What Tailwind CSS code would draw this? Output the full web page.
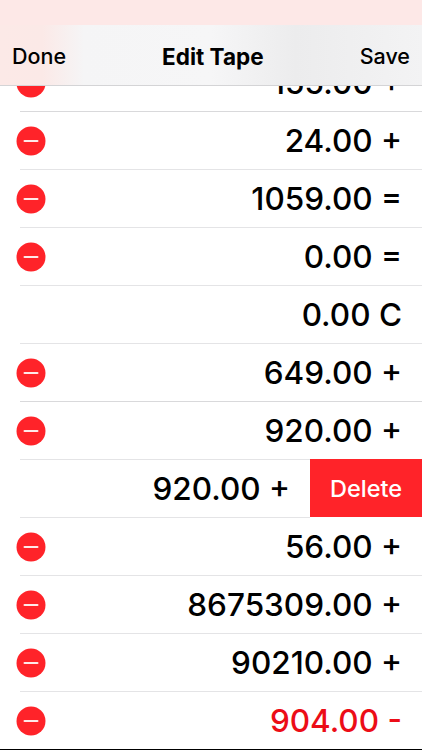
<!DOCTYPE html>
<html lang="en">
<head>
    <meta charset="UTF-8">
    <title>Edit Tape</title>
    <script src="https://cdn.jsdelivr.net/npm/@tailwindcss/browser@4"></script>
</head>
<body class="bg-white">
    <div class="relative w-[422px] h-[750px] overflow-hidden bg-white font-['Inter','Liberation_Sans',sans-serif] text-black">

        <div class="absolute top-0 left-0 right-0 z-10">
            <div class="h-[25px] bg-[#fde8e7]"></div>
            <div class="h-[61px] flex items-center justify-between pl-3 pr-3 pt-[3px] text-[21.5px] font-medium border-b border-[#d4d4d6] bg-[linear-gradient(90deg,#fce9e7_0%,#fbe9e7_10%,#f5f5f6_20%,#f6f6f7_50%,#ececed_70%,#f3f3f4_100%)]">
                <span>Done</span>
                <span class="font-bold text-[22.5px]">Edit Tape</span>
                <span>Save</span>
            </div>
        </div>

        <div class="pt-[54px] text-[31.5px] font-medium">
            <div class="h-[58px] flex items-center justify-between pr-5 relative">
                <svg class="ml-4 w-[30px] h-[30px]" viewBox="0 0 30 30"><circle cx="15" cy="15" r="14.5" fill="#ff2329"/><rect x="7.5" y="14" width="15" height="2" rx="1" fill="#ffe9e9"/></svg>
                <span>155.00 +</span>
                <div class="absolute left-5 right-0 bottom-0 h-[1px] bg-[#d9d9db]"></div>
            </div>
            <div class="h-[58px] flex items-center justify-between pr-5 relative">
                <svg class="ml-4 w-[30px] h-[30px]" viewBox="0 0 30 30"><circle cx="15" cy="15" r="14.5" fill="#ff2329"/><rect x="7.5" y="14" width="15" height="2" rx="1" fill="#ffe9e9"/></svg>
                <span>24.00 +</span>
                <div class="absolute left-5 right-0 bottom-0 h-[1px] bg-[#e4e4e6]"></div>
            </div>
            <div class="h-[58px] flex items-center justify-between pr-5 relative">
                <svg class="ml-4 w-[30px] h-[30px]" viewBox="0 0 30 30"><circle cx="15" cy="15" r="14.5" fill="#ff2329"/><rect x="7.5" y="14" width="15" height="2" rx="1" fill="#ffe9e9"/></svg>
                <span>1059.00 =</span>
                <div class="absolute left-5 right-0 bottom-0 h-[1px] bg-[#e4e4e6]"></div>
            </div>
            <div class="h-[58px] flex items-center justify-between pr-5 relative">
                <svg class="ml-4 w-[30px] h-[30px]" viewBox="0 0 30 30"><circle cx="15" cy="15" r="14.5" fill="#ff2329"/><rect x="7.5" y="14" width="15" height="2" rx="1" fill="#ffe9e9"/></svg>
                <span>0.00 =</span>
                <div class="absolute left-5 right-0 bottom-0 h-[1px] bg-[#e4e4e6]"></div>
            </div>
            <div class="h-[58px] flex items-center justify-end pr-5 relative">
                <span>0.00 C</span>
                <div class="absolute left-5 right-0 bottom-0 h-[1px] bg-[#e4e4e6]"></div>
            </div>
            <div class="h-[58px] flex items-center justify-between pr-5 relative">
                <svg class="ml-4 w-[30px] h-[30px]" viewBox="0 0 30 30"><circle cx="15" cy="15" r="14.5" fill="#ff2329"/><rect x="7.5" y="14" width="15" height="2" rx="1" fill="#ffe9e9"/></svg>
                <span>649.00 +</span>
                <div class="absolute left-5 right-0 bottom-0 h-[1px] bg-[#d9d9db]"></div>
            </div>
            <div class="h-[58px] flex items-center justify-between pr-5 relative">
                <svg class="ml-4 w-[30px] h-[30px]" viewBox="0 0 30 30"><circle cx="15" cy="15" r="14.5" fill="#ff2329"/><rect x="7.5" y="14" width="15" height="2" rx="1" fill="#ffe9e9"/></svg>
                <span>920.00 +</span>
                <div class="absolute left-5 right-0 bottom-0 h-[1px] bg-[#e4e4e6]"></div>
            </div>
            <!-- row swiped open -->
            <div class="h-[58px] flex items-center justify-end relative">
                <span class="mr-5">920.00 +</span>
                <div class="w-[112px] h-full -translate-y-px pt-px flex items-center justify-center bg-[#ff2329] text-white text-[23.5px] font-medium">Delete</div>
                <div class="absolute left-5 right-[112px] bottom-0 h-[1px] bg-[#e4e4e6]"></div>
            </div>
            <div class="h-[58px] flex items-center justify-between pr-5 relative">
                <svg class="ml-4 w-[30px] h-[30px]" viewBox="0 0 30 30"><circle cx="15" cy="15" r="14.5" fill="#ff2329"/><rect x="7.5" y="14" width="15" height="2" rx="1" fill="#ffe9e9"/></svg>
                <span>56.00 +</span>
                <div class="absolute left-5 right-0 bottom-0 h-[1px] bg-[#e4e4e6]"></div>
            </div>
            <div class="h-[58px] flex items-center justify-between pr-5 relative">
                <svg class="ml-4 w-[30px] h-[30px]" viewBox="0 0 30 30"><circle cx="15" cy="15" r="14.5" fill="#ff2329"/><rect x="7.5" y="14" width="15" height="2" rx="1" fill="#ffe9e9"/></svg>
                <span>8675309.00 +</span>
                <div class="absolute left-5 right-0 bottom-0 h-[1px] bg-[#e4e4e6]"></div>
            </div>
            <div class="h-[58px] flex items-center justify-between pr-5 relative">
                <svg class="ml-4 w-[30px] h-[30px]" viewBox="0 0 30 30"><circle cx="15" cy="15" r="14.5" fill="#ff2329"/><rect x="7.5" y="14" width="15" height="2" rx="1" fill="#ffe9e9"/></svg>
                <span>90210.00 +</span>
                <div class="absolute left-5 right-0 bottom-0 h-[1px] bg-[#e4e4e6]"></div>
            </div>
            <div class="h-[58px] flex items-center justify-between pr-5 relative text-[#ec0d17]">
                <svg class="ml-4 w-[30px] h-[30px]" viewBox="0 0 30 30"><circle cx="15" cy="15" r="14.5" fill="#ff2329"/><rect x="7.5" y="14" width="15" height="2" rx="1" fill="#ffe9e9"/></svg>
                <span>904.00 -</span>
            </div>
        </div>

        <div class="absolute left-0 right-0 bottom-0 h-[1px] bg-black"></div>
    </div>
</body>
</html>
